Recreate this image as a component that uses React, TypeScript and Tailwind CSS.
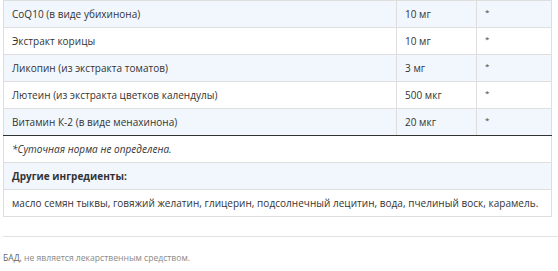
const rows = [
  { name: 'CoQ10 (в виде убихинона)', amount: '10 мг' },
  { name: 'Экстракт корицы', amount: '10 мг' },
  { name: 'Ликопин (из экстракта томатов)', amount: '3 мг' },
  { name: 'Лютеин (из экстракта цветков календулы)', amount: '500 мкг' },
  { name: 'Витамин К-2 (в виде менахинона)', amount: '20 мкг' },
]

export default function App() {
  return (
    <div
      className="w-[558px] h-[271px] overflow-hidden bg-white pl-[3px] text-[#333]"
      style={{ fontFamily: '"Open Sans", "Noto Sans", sans-serif' }}
    >
      <table className="w-[549px] border-collapse text-[10px] leading-none tracking-[0.03px]">
        <tbody>
          {rows.map((r, i) => (
            <tr key={r.name} className={i % 2 === 0 ? 'bg-[#f1f7fd]' : 'bg-white'}>
              <td className={`h-[27px] border border-[#dedede] px-2 ${i === rows.length - 1 ? 'border-b-[#333]' : ''}`}>
                {r.name}
              </td>
              <td className={`w-[80px] h-[27px] border border-[#dedede] px-2 ${i === rows.length - 1 ? 'border-b-[#333]' : ''}`}>
                {r.amount}
              </td>
              <td className={`w-[75px] h-[27px] border border-[#dedede] px-2 align-middle ${i === rows.length - 1 ? 'border-b-[#333]' : ''}`}>
                <span className="relative top-[-3px] text-[8px] text-[#444]">*</span>
              </td>
            </tr>
          ))}
          <tr className="bg-white">
            <td colSpan={3} className="h-[27px] border border-[#dedede] border-t-[#333] px-2 italic">
              *Суточная норма не определена.
            </td>
          </tr>
          <tr className="bg-[#f1f7fd]">
            <td colSpan={3} className="h-[27px] border border-[#dedede] px-2 font-bold">
              Другие ингредиенты:
            </td>
          </tr>
          <tr className="bg-white">
            <td colSpan={3} className="h-[27px] border border-[#dedede] px-2">
              масло семян тыквы, говяжий желатин, глицерин, подсолнечный лецитин, вода, пчелиный воск, карамель.
            </td>
          </tr>
        </tbody>
      </table>
      <div className="mt-[19px] border-t border-[#e2e2e2]" />
      <p className="mt-[15px] text-[8.6px] text-[#8a8a8a]">
        <span className="text-[#666]">БАД,</span> не является лекарственным средством.
      </p>
    </div>
  )
}
